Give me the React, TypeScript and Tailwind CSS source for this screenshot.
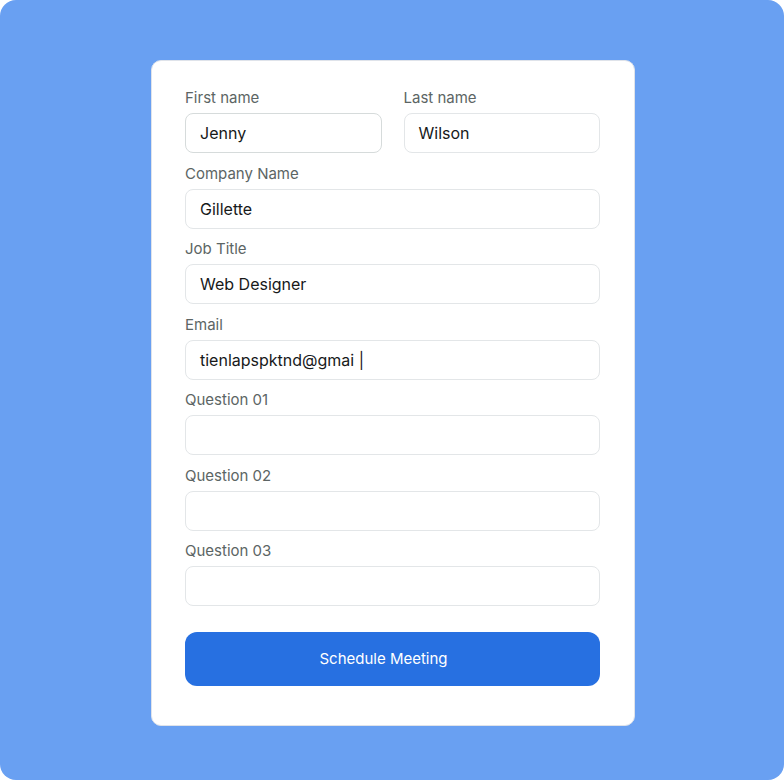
import React from "react";

const font = { fontFamily: "Inter, 'Liberation Sans', sans-serif" };

function Field({ label, value, focused }: { label: string; value?: string; focused?: boolean }) {
  return (
    <div className="flex flex-col">
      <label className="text-[15px] leading-[20px] text-[#5c6564] mb-[5px]">{label}</label>
      <div
        className={
          focused
            ? "h-[40px] rounded-[8px] border border-[#d6dbdb] bg-white flex items-center px-[14px] text-[16px] text-[#17191a]"
            : "h-[40px] rounded-[8px] border border-[#e3e6e8] bg-white flex items-center px-[14px] text-[16px] text-[#17191a]"
        }
      >
        {value}
      </div>
    </div>
  );
}

export default function App() {
  return (
    <div className="w-[784px] h-[780px] bg-white" style={font}>
      <div className="w-full h-full rounded-[16px] bg-[#69a0f2] flex items-start justify-center pt-[60px] pl-[2px]">
        <div className="w-[484px] h-[666px] bg-white rounded-[10px] border border-[#dfe3ea] pl-[33px] pr-[34px] pt-[27px] flex flex-col">
          <div className="flex flex-col gap-[10.5px]">
            <div className="grid grid-cols-2 gap-[22px]">
              <Field label="First name" value="Jenny" focused />
              <Field label="Last name" value="Wilson" />
            </div>
            <Field label="Company Name" value="Gillette" />
            <Field label="Job Title" value="Web Designer" />
            <Field label="Email" value="tienlapspktnd@gmai |" />
            <Field label="Question 01" />
            <Field label="Question 02" />
            <Field label="Question 03" />
          </div>
          <button className="mt-[26px] h-[54px] rounded-[12px] bg-[#2770e1] text-white text-[15px] pr-[18px]">
            Schedule Meeting
          </button>
        </div>
      </div>
    </div>
  );
}
